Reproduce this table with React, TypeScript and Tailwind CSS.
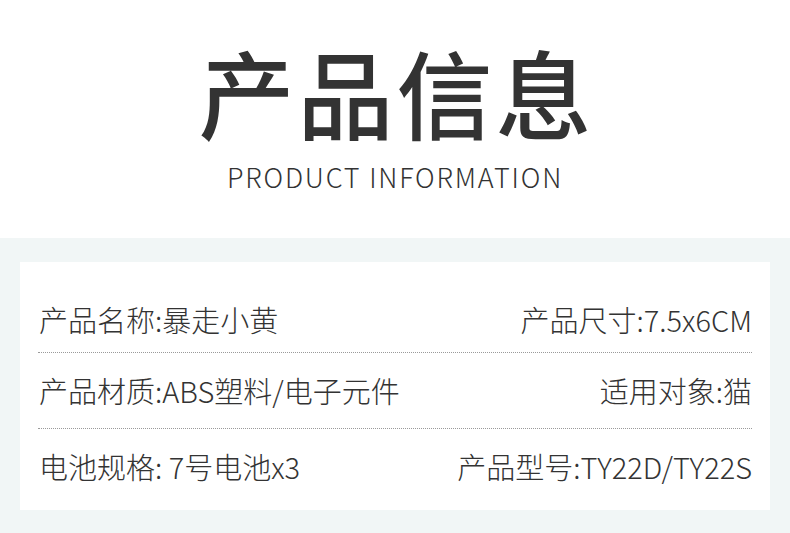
const rows = [
  { left: '产品名称:暴走小黄', right: '产品尺寸:7.5x6CM' },
  { left: '产品材质:ABS塑料/电子元件', right: '适用对象:猫' },
  { left: '电池规格: 7号电池x3', right: '产品型号:TY22D/TY22S' },
];

export default function App() {
  return (
    <div className="w-[790px] h-[533px] bg-white flex flex-col overflow-hidden font-['Noto_Sans_CJK_SC',sans-serif] text-[#333333]">
      {/* Header */}
      <div className="h-[238px] flex flex-col items-center shrink-0">
        <h1 className="mt-[41px] text-[96px] leading-[100px] font-medium tracking-[3px] pl-[3px]">产品信息</h1>
        <div className="mt-[19px] text-[27px] leading-[34px] font-light tracking-[1.8px]">PRODUCT INFORMATION</div>
      </div>

      {/* Info panel */}
      <div className="flex-1 bg-[#f1f6f6] px-[20px] pt-[24px]">
        <div className="bg-white h-[248px] px-[18px] pt-[25px]">
          {rows.map((row, idx) => (
            <div
              key={idx}
              className={`flex items-center justify-between text-[29px] font-light pl-[1px] pr-[0px] ${idx === 0 ? 'h-[66px]' : 'h-[76px]'} ${idx < rows.length - 1 ? 'border-b border-dotted border-[#9a9a9a]' : ''}`}
            >
              <span>{row.left}</span>
              <span>{row.right}</span>
            </div>
          ))}
        </div>
      </div>
    </div>
  );
}
